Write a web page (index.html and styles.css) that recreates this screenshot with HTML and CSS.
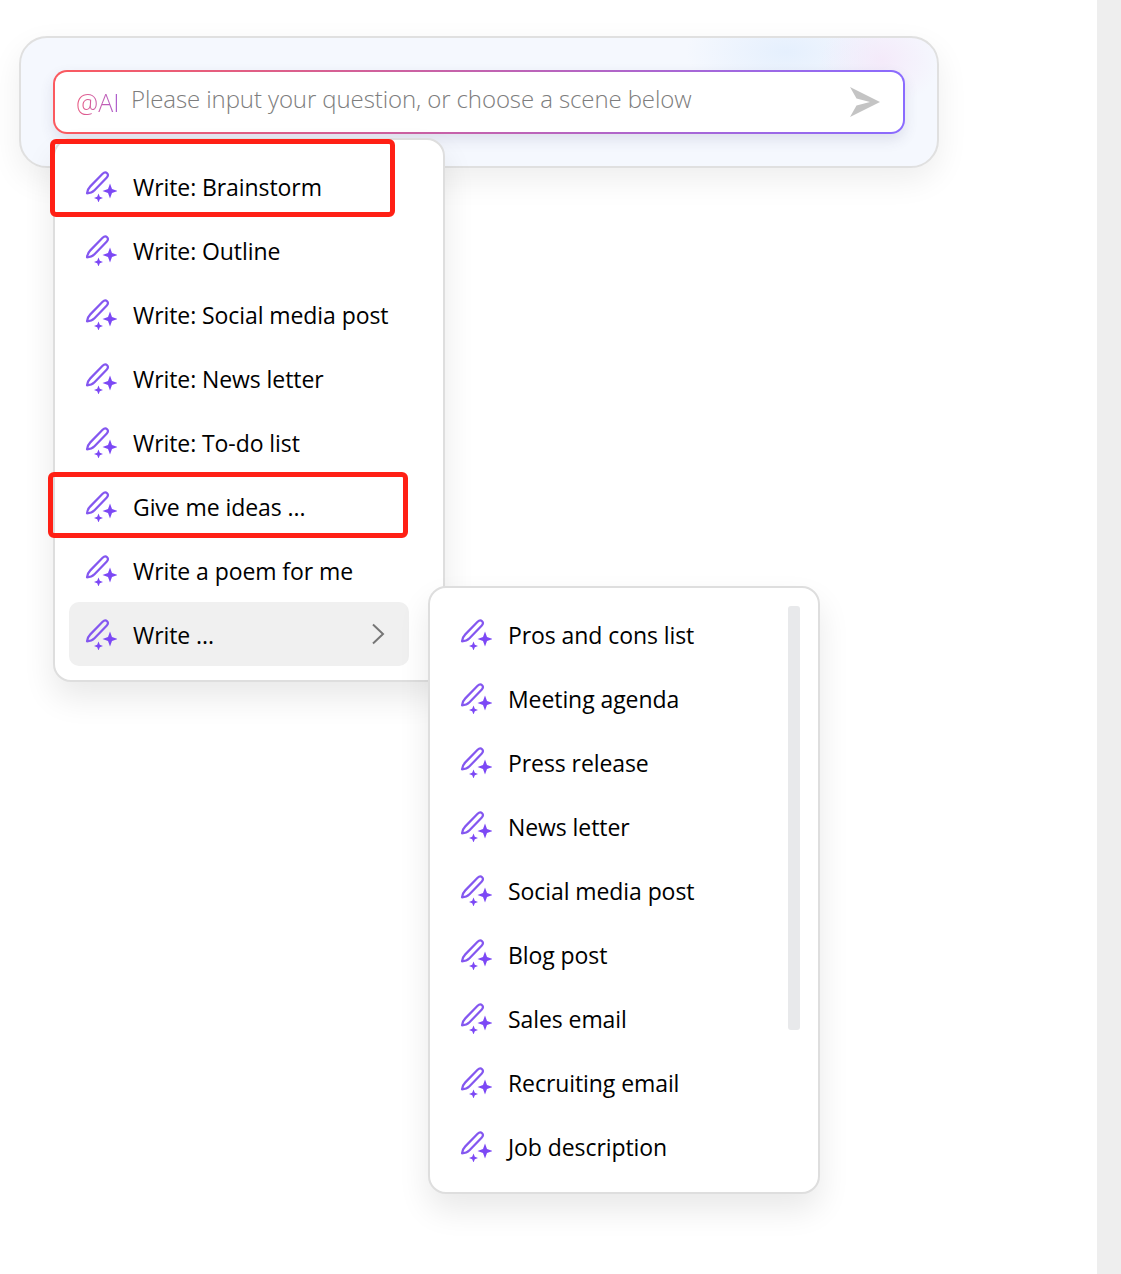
FILE: index.html
```html
<!DOCTYPE html>
<html lang="en">
<head>
<meta charset="utf-8">
<title>AI prompt menu</title>
<link rel="stylesheet" href="styles.css">
</head>
<body>
<svg class="defs" width="0" height="0" aria-hidden="true">
  <symbol id="pen" viewBox="0 0 32 32">
    <path class="pen-line" d="M2 23.300C2.300 20.400 3.400 18.300 5.300 16.400L17.600 3.800C19 2.400 20.800 2 22.100 3.200C23.400 4.500 23 6.200 21.600 7.700L9.500 20.300C7.600 22.200 5.200 23.200 2 23.300Z"/>
    <path class="pen-star" d="M25 13.500L27 19L32.500 21L27 23L25 28.500L23 23L17.500 21L23 19Z"/>
    <path class="pen-star" d="M13.500 23.500L14.800 26.700L18 28L14.800 29.300L13.500 32.500L12.200 29.300L9 28L12.200 26.700Z"/>
  </symbol>
</svg>
<main class="stage">
  <section class="panel">
    <div class="input">
      <span class="at">@AI</span>
      <span class="placeholder">Please input your question, or choose a scene below</span>
      <svg class="send" viewBox="0 0 30 30"><path d="M0 0L30 15L0 30L6.500 18.500L20 15L6.500 11.500Z"/></svg>
    </div>
  </section>

  <ul class="menu menu-main">
    <li class="item"><svg class="icon"><use href="#pen"/></svg><span>Write: Brainstorm</span></li>
    <li class="item"><svg class="icon"><use href="#pen"/></svg><span>Write: Outline</span></li>
    <li class="item"><svg class="icon"><use href="#pen"/></svg><span>Write: Social media post</span></li>
    <li class="item"><svg class="icon"><use href="#pen"/></svg><span>Write: News letter</span></li>
    <li class="item"><svg class="icon"><use href="#pen"/></svg><span>Write: To-do list</span></li>
    <li class="item"><svg class="icon"><use href="#pen"/></svg><span>Give me ideas ...</span></li>
    <li class="item"><svg class="icon"><use href="#pen"/></svg><span>Write a poem for me</span></li>
    <li class="item item-active"><svg class="icon"><use href="#pen"/></svg><span>Write ...</span>
      <svg class="chevron" viewBox="0 0 14 22"><path d="M2 1.500L12 11L2 20.500"/></svg></li>
  </ul>

  <ul class="menu menu-sub">
    <li class="item"><svg class="icon"><use href="#pen"/></svg><span>Pros and cons list</span></li>
    <li class="item"><svg class="icon"><use href="#pen"/></svg><span>Meeting agenda</span></li>
    <li class="item"><svg class="icon"><use href="#pen"/></svg><span>Press release</span></li>
    <li class="item"><svg class="icon"><use href="#pen"/></svg><span>News letter</span></li>
    <li class="item"><svg class="icon"><use href="#pen"/></svg><span>Social media post</span></li>
    <li class="item"><svg class="icon"><use href="#pen"/></svg><span>Blog post</span></li>
    <li class="item"><svg class="icon"><use href="#pen"/></svg><span>Sales email</span></li>
    <li class="item"><svg class="icon"><use href="#pen"/></svg><span>Recruiting email</span></li>
    <li class="item"><svg class="icon"><use href="#pen"/></svg><span>Job description</span></li>
    <li class="thumb"></li>
  </ul>

  <div class="mark mark-one"></div>
  <div class="mark mark-two"></div>
</main>
<div class="page-scrollbar"></div>
</body>
</html>
```

FILE: styles.css
```css
* { box-sizing: border-box; }
html, body { margin: 0; height: 100%; overflow: hidden; background: #fff; }
body { font-family: "Open Sans", "Noto Sans", "Liberation Sans", sans-serif; color: #000; }
.defs { position: absolute; }

.stage { position: relative; width: 1097px; height: 1274px; padding: 36px 0 0 19px; }

.panel {
  width: 920px; height: 132px; padding: 32px;
  border: 2px solid #e0e0e0; border-radius: 28px;
  background:
    radial-gradient(ellipse 60px 46px at 860px 22px, rgba(244, 228, 248, .7), transparent),
    radial-gradient(ellipse 100px 48px at 765px 14px, rgba(226, 238, 253, .85), transparent),
    #f5f8fe;
  box-shadow: 0 12px 32px rgba(0, 0, 0, .07);
}
.input {
  display: flex; align-items: center;
  width: 852px; height: 64px; padding: 0 23px 6px 21px;
  border: 2px solid transparent; border-radius: 14px;
  background:
    linear-gradient(#fff, #fff) padding-box,
    linear-gradient(90deg, #fb5a5f, #8a6bff) border-box;
  box-shadow: 0 6px 14px rgba(60, 60, 110, .12);
}
.at {
  width: 55px; flex: none; font-size: 25px; line-height: 32px; font-weight: 300; padding-top: 6px;
  background: linear-gradient(90deg, #ea5a80, #9a62e8);
  -webkit-background-clip: text; background-clip: text; color: transparent;
}
.placeholder { flex: 1; font-size: 24px; line-height: 32px; letter-spacing: -.1px; font-weight: 300; color: #7d7d7d; white-space: nowrap; padding-bottom: 1px; }
.send { width: 30px; height: 30px; flex: none; margin-top: 6px; }
.send path { fill: #c4c4c4; }

.menu {
  position: absolute; margin: 0; padding: 14px;
  list-style: none; background: #fff;
  border: 2px solid #dedede; border-radius: 18px;
  box-shadow: 0 16px 32px rgba(0, 0, 0, .09);
}
.menu-main { left: 53px; top: 138px; width: 392px; height: 544px; }
.menu-sub { left: 428px; top: 586px; width: 392px; height: 608px; }

.item {
  display: flex; align-items: center; gap: 16px;
  width: 340px; height: 64px; padding-left: 16px;
  font-size: 23px; letter-spacing: -.08px; line-height: 32px; border-radius: 10px;
  white-space: nowrap;
}
.item span { padding-top: 2px; }
.item-active { background: #f0f0f0; }
.icon { width: 32px; height: 32px; flex: none; }
.pen-line { fill: none; stroke: #8457f0; stroke-width: 2.2; stroke-linejoin: round; }
.pen-star { fill: #7c48f5; }
.chevron { width: 14px; height: 22px; margin-left: auto; margin-right: 24px; }
.chevron path { fill: none; stroke: #767676; stroke-width: 2; }

.thumb {
  position: absolute; left: 358px; top: 18px;
  width: 12px; height: 424px; border-radius: 3px; background: #e8e9eb;
}

.mark { position: absolute; border: 5px solid #ff2015; border-radius: 6px; }
.mark-one { left: 50px; top: 139px; width: 345px; height: 78px; }
.mark-two { left: 48px; top: 472px; width: 360px; height: 66px; }

.page-scrollbar {
  position: fixed; top: 0; right: 0; width: 24px; height: 100%;
  background: #eeeeee;
}
```
